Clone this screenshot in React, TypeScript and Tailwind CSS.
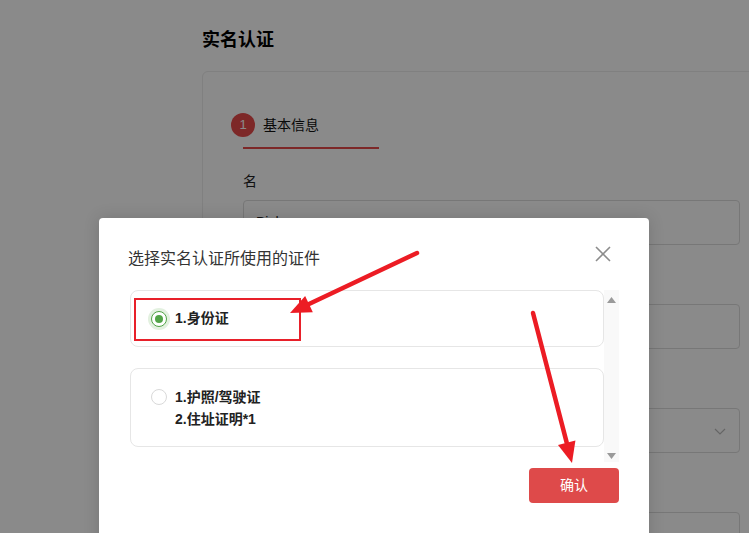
import React from "react";

const font = "font-['Liberation_Sans','Noto_Sans_CJK_SC',sans-serif]";

const Field = ({ label, value, select }: { label?: string; value?: string; select?: boolean }) => (
  <div className="mb-[30px]">
    <div className="h-[20px] text-[14px] leading-[20px] text-[#222]">{label}</div>
    <div className="mt-[9px] flex h-[45px] w-[497px] items-center justify-between rounded border border-[#dcdcdc] bg-white px-[12px] text-[14px] text-[#222]">
      <span>{value}</span>
      {select && (
        <svg width="14" height="14" viewBox="0 0 14 14" fill="none" stroke="#bbb" strokeWidth="1.2">
          <path d="M2 5l5 5 5-5" />
        </svg>
      )}
    </div>
  </div>
);

const Radio = ({ checked }: { checked?: boolean }) =>
  checked ? (
    <span className="flex h-[16px] w-[16px] shrink-0 items-center justify-center rounded-full border border-[#52a447] bg-white shadow-[0_0_0_3px_#e3f1e0]">
      <span className="h-[8px] w-[8px] rounded-full bg-[#52a447]" />
    </span>
  ) : (
    <span className="block h-[16px] w-[16px] shrink-0 rounded-full border border-[#d9d9d9] bg-white" />
  );

const Arrow = ({ x1, y1, x2, y2 }: { x1: number; y1: number; x2: number; y2: number }) => {
  const dx = x2 - x1;
  const dy = y2 - y1;
  const len = Math.hypot(dx, dy);
  const ux = dx / len;
  const uy = dy / len;
  const bx = x2 - ux * 21;
  const by = y2 - uy * 21;
  const nx = -uy * 9;
  const ny = ux * 9;
  return (
    <g>
      <line x1={x1} y1={y1} x2={bx} y2={by} stroke="#ec1c24" strokeWidth="4.5" strokeLinecap="round" />
      <polygon points={`${x2},${y2} ${bx + nx},${by + ny} ${bx - nx},${by - ny}`} fill="#ec1c24" />
    </g>
  );
};

export default function App() {
  return (
    <div className={`relative h-[533px] w-[749px] overflow-hidden bg-white ${font}`}>
      {/* page behind the dialog */}
      <div className="pl-[202px] pt-[28px]">
        <h1 className="text-[18px] font-bold leading-[24px] text-black">实名认证</h1>
        <div className="mt-[19px] w-[600px] rounded-tl-md border border-[#ececec] bg-white pl-[40px] pt-[41px]">
          <div className="w-[136px] border-b-2 border-[#e84a4a] pb-[10px]">
            <div className="-ml-[12px] flex items-center gap-[8px]">
              <span className="flex h-[24px] w-[24px] items-center justify-center rounded-full bg-[#e84a4a] text-[13px] text-white">1</span>
              <span className="text-[14px] leading-[20px] text-[#111]">基本信息</span>
            </div>
          </div>
          <div className="pt-[22px]">
            <Field label="名" value="Bishop" />
            <Field />
            <Field select />
            <Field />
          </div>
        </div>
      </div>

      <div className="absolute inset-0 bg-black/[0.46]" />

      {/* dialog */}
      <div className="absolute left-[99px] top-[218px] h-[340px] w-[550px] rounded bg-white pl-[29px] pr-[30px] pt-[31px] shadow-[0_0_16px_rgba(0,0,0,0.15)]">
        <div className="flex items-center justify-between">
          <h2 className="text-[16px] leading-[20px] text-[#333]">选择实名认证所使用的证件</h2>
          <svg className="mr-[8px] -mt-[10px]" width="16" height="16" viewBox="0 0 16 16" stroke="#8c8c8c" strokeWidth="1.6">
            <path d="M1 1l14 14M15 1L1 15" />
          </svg>
        </div>

        <div className="mt-[21px] flex h-[172px]">
          <div className="flex flex-1 flex-col gap-[21px] pl-[2px]">
            <div className="flex items-center gap-[8px] rounded-lg border border-[#e6e6e6] py-[17px] pl-[20px] text-[14px] font-bold leading-[21px] text-[#222]">
              <Radio checked />
              <span>1.身份证</span>
            </div>
            <div className="flex gap-[8px] rounded-lg border border-[#e6e6e6] pb-[16px] pl-[20px] pt-[17px] text-[14px] font-bold leading-[22px] text-[#222]">
              <div className="pt-[3px]">
                <Radio />
              </div>
              <div>
                <div>1.护照/驾驶证</div>
                <div>2.住址证明*1</div>
              </div>
            </div>
          </div>
          <div className="flex w-[15px] flex-col items-center justify-between bg-[#f9f9f9] pb-[3px] pt-[7px]">
            <svg width="9" height="6" viewBox="0 0 9 6"><path d="M4.5 0L9 6H0z" fill="#9a9a9a" /></svg>
            <svg width="9" height="6" viewBox="0 0 9 6"><path d="M0 0h9L4.5 6z" fill="#9a9a9a" /></svg>
          </div>
        </div>

        <div className="mt-[6px] flex justify-end">
          <button className="h-[35px] w-[90px] rounded bg-[#de4a4a] text-[14px] text-white">确认</button>
        </div>
      </div>

      {/* annotations */}
      <div className="absolute left-[134px] top-[298px] h-[43px] w-[167px] border-2 border-[#e8202a]" />
      <svg className="pointer-events-none absolute inset-0" width="749" height="533">
        <Arrow x1={417} y1={253} x2={290} y2={313} />
        <Arrow x1={533} y1={313} x2={572} y2={463} />
      </svg>
    </div>
  );
}
